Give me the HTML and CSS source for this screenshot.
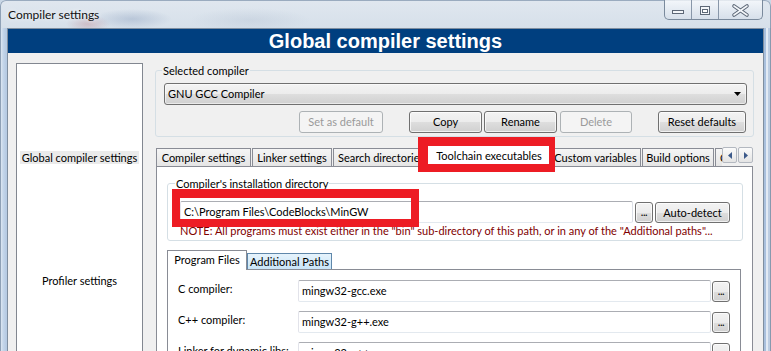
FILE: index.html
```html
<!DOCTYPE html>
<html>
<head>
<meta charset="utf-8">
<title>Compiler settings</title>
<link rel="stylesheet" href="styles.css">
</head>
<body>
<div class="window">
  <div class="titlebar">
    <div class="title">Compiler settings</div>
    <div class="caption">
      <div class="cap-btn cap-min">
        <svg width="26" height="19" viewBox="0 0 26 19"><rect x="7.5" y="10.5" width="11" height="3" fill="#f3f6f9" stroke="#5d6877"/></svg>
      </div>
      <div class="cap-btn cap-max">
        <svg width="27" height="19" viewBox="0 0 27 19"><rect x="8.5" y="6.5" width="9" height="8" fill="#f3f6f9" stroke="#5d6877"/><rect x="10.5" y="9.5" width="5" height="3" fill="#fff" stroke="#5d6877"/></svg>
      </div>
      <div class="cap-btn cap-close">
        <svg width="44" height="19" viewBox="0 0 44 19"><path d="M15 6 L28 15 M28 6 L15 15" stroke="#5d6877" stroke-width="3.6" stroke-linecap="round"/><path d="M15 6 L28 15 M28 6 L15 15" stroke="#f3f6f9" stroke-width="1.6" stroke-linecap="round"/></svg>
      </div>
    </div>
  </div>
  <div class="frame">
    <div class="client">
      <div class="banner">Global compiler settings</div>
      <div class="main">
        <div class="listbook">
          <div class="lb-item"><span class="lb-label selected">Global compiler settings</span></div>
          <div class="lb-item"><span class="lb-label">Profiler settings</span></div>
        </div>
        <div class="content">
          <fieldset class="group group-compiler">
            <legend>Selected compiler</legend>
            <div class="combo">
              <span class="combo-text">GNU GCC Compiler</span>
              <svg class="combo-arrow" width="7" height="4" viewBox="0 0 7 4"><polygon points="0,0 7,0 3.5,4" fill="#000"/></svg>
            </div>
            <div class="btn-row">
              <div class="btn disabled b-default">Set as default</div>
              <div class="btn b-copy">Copy</div>
              <div class="btn b-rename">Rename</div>
              <div class="btn disabled b-delete">Delete</div>
              <div class="btn b-reset">Reset defaults</div>
            </div>
          </fieldset>
          <div class="notebook">
            <div class="tabs">
              <div class="tab t1">Compiler settings</div>
              <div class="tab t2">Linker settings</div>
              <div class="tab t3">Search directories</div>
              <div class="tab t4 active">Toolchain executables</div>
              <div class="tab t5">Custom variables</div>
              <div class="tab t6">Build options</div>
              <div class="tab t7">Other settings</div>
              <div class="scroll-btn">
                <svg width="4" height="7" viewBox="0 0 4 7"><polygon points="4,0 4,7 0,3.5" fill="#3d5a8a"/></svg>
              </div>
              <div class="scroll-btn">
                <svg width="4" height="7" viewBox="0 0 4 7"><polygon points="0,0 0,7 4,3.5" fill="#3d5a8a"/></svg>
              </div>
            </div>
            <div class="page">
              <fieldset class="group group-dir">
                <legend>Compiler's installation directory</legend>
                <div class="dir-row">
                  <div class="edit dir-edit">C:\Program Files\CodeBlocks\MinGW</div>
                  <div class="btn dots dir-dots">...</div>
                  <div class="btn auto-btn">Auto-detect</div>
                </div>
                <div class="note">NOTE: All programs must exist either in the "bin" sub-directory of this path, or in any of the "Additional paths"...</div>
              </fieldset>
              <div class="notebook2">
                <div class="tabs2">
                  <div class="tab2 tab2-active">Program Files</div>
                  <div class="tab2 tab2-hot">Additional Paths</div>
                </div>
                <div class="page2">
                  <div class="row">
                    <div class="row-label">C compiler:</div>
                    <div class="edit row-edit">mingw32-gcc.exe</div>
                    <div class="btn dots">...</div>
                  </div>
                  <div class="row">
                    <div class="row-label">C++ compiler:</div>
                    <div class="edit row-edit">mingw32-g++.exe</div>
                    <div class="btn dots">...</div>
                  </div>
                  <div class="row">
                    <div class="row-label">Linker for dynamic libs:</div>
                    <div class="edit row-edit">mingw32-g++.exe</div>
                    <div class="btn dots">...</div>
                  </div>
                </div>
              </div>
            </div>
          </div>
        </div>
      </div>
    </div>
  </div>
  <div class="mark mark-tab"></div>
  <div class="mark mark-dir"></div>
</div>
</body>
</html>
```

FILE: styles.css
```css
* { box-sizing: border-box; }

html, body {
  margin: 0;
  padding: 0;
}

body {
  width: 771px;
  height: 351px;
  overflow: hidden;
  background: #c9d7e6;
  font-family: Lato, "Liberation Sans", Arial, sans-serif;
  font-size: 11px;
  color: #000;
}

.window {
  position: relative;
  width: 771px;
  height: 351px;
  display: flex;
  flex-direction: column;
  overflow: hidden;
  border-radius: 6px 6px 0 0;
  background:
    radial-gradient(ellipse 22px 9px at 88px 24px, rgba(170, 60, 70, 0.22), transparent),
    radial-gradient(ellipse 40px 10px at 132px 19px, rgba(70, 100, 150, 0.22), transparent),
    radial-gradient(ellipse 60px 12px at 250px 20px, rgba(120, 140, 170, 0.14), transparent),
    linear-gradient(to bottom, #e0e7ef 0, #d6e0ea 28px, #c9d8e8 100%);
  box-shadow: inset 1px 0 0 #8fa1b6, inset 0 1px 0 #9aabbf, inset -1px 0 0 #8fa1b6;
}

/* ---------- title bar ---------- */
.titlebar {
  flex: none;
  height: 28px;
  display: flex;
  align-items: flex-start;
}

.title {
  padding: 8px 0 0 8px;
  font-size: 12px;
  line-height: 14px;
  color: #111;
  text-shadow: 0 0 5px rgba(255, 255, 255, 0.9);
}

.caption {
  margin-left: auto;
  margin-right: 8px;
  display: flex;
  height: 20px;
  border: 1px solid #7a8a9c;
  border-top: none;
  border-radius: 0 0 5px 5px;
  overflow: hidden;
  background: linear-gradient(to bottom, rgba(250, 252, 254, 0.75), rgba(214, 223, 234, 0.75));
}

.cap-btn {
  height: 19px;
  flex: none;
}

.cap-btn svg { display: block; }

.cap-min { width: 26px; }
.cap-max { width: 27px; border-left: 1px solid #8897a9; }
.cap-close { width: 44px; border-left: 1px solid #8897a9; }

/* ---------- frame ---------- */
.frame {
  flex: 1;
  min-height: 0;
  display: flex;
  padding: 0 7px;
  background:
    linear-gradient(to right, #8fa1b6 0, #8fa1b6 1px, #dde7f2 1px, #c6d7ea 3px, #b7cbe3 6px, #b7cbe3 7px) left top / 7px 100% no-repeat,
    linear-gradient(to right, #a9c0dd 0, #a9c0dd 2px, #e2eaf4 2px, #e2eaf4 4px, #bccde2 4px, #bccde2 6px, #8799ae 6px) right top / 7px 100% no-repeat;
}

.client {
  flex: 1;
  min-width: 0;
  display: flex;
  flex-direction: column;
  overflow: hidden;
  border: 1px solid #7f8e9f;
  border-bottom: none;
  background: #f0f0f0;
}

.banner {
  flex: none;
  height: 24px;
  background: #003f7f;
  color: #fff;
  font: bold 20px/24px "Liberation Sans", Arial, sans-serif;
  text-align: center;
}

.main {
  flex: 1;
  min-height: 0;
  display: flex;
  gap: 12px;
  padding: 10px 9px 0 8px;
}

/* ---------- left list ---------- */
.listbook {
  flex: none;
  width: 127px;
  background: #fff;
  border: 1px solid #828790;
  border-bottom: none;
  text-align: center;
  padding-top: 87px;
}

.lb-item {
  height: 13px;
  line-height: 13px;
  white-space: nowrap;
}

.lb-item + .lb-item { margin-top: 110px; }

.lb-label {
  display: inline-block;
  padding: 0 2px;
}

.lb-label.selected { background: #ebebeb; }

/* ---------- right content ---------- */
.content {
  flex: 1;
  min-width: 0;
  display: flex;
  flex-direction: column;
}

.group {
  margin: 0;
  min-width: 0;
  border: 1px solid #d5dfe5;
  border-radius: 3px;
}

.group legend {
  padding: 0 1px;
  margin-left: -2px;
  height: 15px;
  line-height: 15px;
}

.group-compiler {
  flex: none;
  padding: 5px 6px 3px 8px;
}

.combo {
  height: 22px;
  display: flex;
  align-items: center;
  padding: 0 5px 0 3px;
  border: 1px solid #707070;
  border-radius: 3px;
  background: linear-gradient(to bottom, #f3f3f3 0%, #ececec 50%, #dedede 51%, #d0d0d0 100%);
  box-shadow: inset 0 0 0 1px rgba(255, 255, 255, 0.55);
  line-height: 20px;
}

.combo-text { flex: 1; }
.combo-arrow { display: block; }

.btn-row {
  display: flex;
  margin-top: 6px;
}

.btn {
  flex: none;
  height: 22px;
  border: 1px solid #707070;
  border-radius: 3px;
  background: linear-gradient(to bottom, #f3f3f3 0%, #ececec 50%, #dedede 51%, #d0d0d0 100%);
  box-shadow: inset 0 0 0 1px rgba(255, 255, 255, 0.7);
  text-align: center;
  line-height: 20px;
  white-space: nowrap;
}

.btn.disabled {
  border-color: #adb2b5;
  background: #f4f4f4;
  box-shadow: none;
  color: #9a9a9a;
}

.b-default { width: 84px; margin-left: 135px; }
.b-copy { width: 73px; margin-left: 26px; }
.b-rename { width: 73px; margin-left: 2px; }
.b-delete { width: 72px; margin-left: 3px; }
.b-reset { width: 88px; margin-left: 26px; }

/* ---------- main notebook ---------- */
.notebook {
  flex: 1;
  min-height: 0;
  display: flex;
  flex-direction: column;
  margin: 8px 1px 0 1px;
}

.tabs {
  flex: none;
  height: 22px;
  margin-bottom: -1px;
  display: flex;
  align-items: flex-end;
  position: relative;
  z-index: 1;
}

.tab {
  flex: none;
  height: 18px;
  margin-bottom: 1px;
  border: 1px solid #898c95;
  border-bottom: none;
  background: linear-gradient(to bottom, #f5f5f5, #e5e5e5);
  line-height: 17px;
  text-align: center;
  white-space: nowrap;
  overflow: hidden;
}

.tab.active {
  height: 22px;
  margin-bottom: 0;
  background: #fff;
  line-height: 20px;
  position: relative;
  z-index: 1;
}

.t1 { width: 95px; }
.t2 { width: 80px; margin-left: 1px; }
.t3 { width: 95px; margin-left: 1px; text-align: left; padding-left: 4px; }
.t4 { width: 126px; margin-left: -2px; }
.t5 { width: 91px; margin-left: -2px; }
.t6 { width: 72px; margin-left: 1px; }
.t7 { width: 7px; margin-left: 1px; text-align: left; padding-left: 4px; border-right: none; }

.scroll-btn {
  flex: none;
  align-self: flex-start;
  width: 15px;
  height: 16px;
  margin-top: 2px;
  display: flex;
  align-items: center;
  justify-content: center;
  border: 1px solid #b3b8c0;
  border-radius: 2px;
  background: linear-gradient(to bottom, #fbfbfb, #e4e4e4);
}

.scroll-btn + .scroll-btn { margin-left: 1px; }
.scroll-btn svg { display: block; }

.page {
  flex: 1;
  min-height: 0;
  display: flex;
  flex-direction: column;
  background: #fff;
  border: 1px solid #898c95;
  border-bottom: none;
  padding: 9px 9px 0 10px;
}

.group-dir {
  flex: none;
  padding: 10px 12px 2px 12px;
}

.group-dir legend { margin-left: -5px; }

.dir-row {
  display: flex;
  align-items: flex-start;
  height: 23px;
}

.edit {
  flex: none;
  height: 22px;
  padding: 0 3px;
  border: 1px solid;
  border-color: #abadb3 #dbdfe6 #e3e9ef #e2e3ea;
  border-radius: 2px;
  background: #fff;
  line-height: 19px;
  white-space: nowrap;
  overflow: hidden;
}

.dir-edit { width: 453px; }

.dots {
  width: 18px;
  height: 21px;
  margin-top: 1px;
  line-height: 17px;
  letter-spacing: -0.5px;
}

.dir-dots { margin-left: 2px; }

.auto-btn {
  width: 75px;
  height: 21px;
  margin: 1px 0 0 2px;
  line-height: 19px;
}

.note {
  color: #800000;
  line-height: 14px;
  white-space: nowrap;
  overflow: hidden;
}

/* ---------- inner notebook ---------- */
.notebook2 {
  flex: 1;
  min-height: 0;
  display: flex;
  flex-direction: column;
  margin: 9px 2px 0 0;
}

.tabs2 {
  flex: none;
  height: 20px;
  margin-bottom: -1px;
  display: flex;
  align-items: flex-end;
  position: relative;
  z-index: 1;
}

.tab2 {
  flex: none;
  border: 1px solid #898c95;
  border-bottom: none;
  text-align: center;
  white-space: nowrap;
}

.tab2-active {
  width: 80px;
  height: 20px;
  background: #fff;
  line-height: 18px;
}

.tab2-hot {
  width: 85px;
  height: 16px;
  margin-bottom: 1px;
  border-color: #5f87aa;
  background: linear-gradient(to bottom, #e6f3fc, #c9e5f7);
  line-height: 16px;
}

.page2 {
  flex: 1;
  min-height: 0;
  background: #fff;
  border: 1px solid #898c95;
  border-bottom: none;
  padding: 10px 10px 0 10px;
}

.row {
  display: flex;
  align-items: flex-start;
  height: 22px;
  margin-bottom: 9px;
}

.row-label {
  flex: none;
  width: 120px;
  line-height: 18px;
  white-space: nowrap;
}

.row-edit { width: 413px; }

.row .dots { margin-left: 1px; }

/* ---------- red annotation marks ---------- */
.mark {
  position: absolute;
  border-style: solid;
  border-color: #ed1c24;
  pointer-events: none;
  z-index: 5;
}

.mark-tab {
  left: 418px;
  top: 137px;
  width: 137px;
  height: 35px;
  border-width: 9px 6px 8px 10px;
}

.mark-dir {
  left: 172px;
  top: 189px;
  width: 247px;
  height: 38px;
  border-width: 9px 8px 8px 8px;
}
```
